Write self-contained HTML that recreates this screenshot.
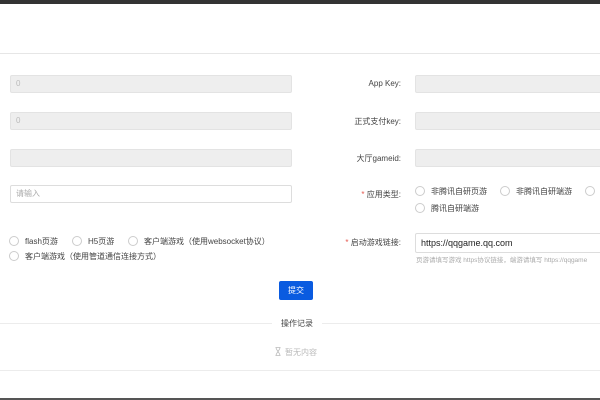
<!DOCTYPE html>
<html><head><meta charset="utf-8"><style>
*{box-sizing:border-box;margin:0;padding:0}
body{width:600px;height:400px;overflow:hidden;background:#fff;font-family:"Liberation Sans","Noto Sans CJK SC",sans-serif;font-size:8px;color:#333;position:relative}
.a{position:absolute}
.in{position:absolute;height:18px;background:#eee;border:1px solid #e3e3e3;border-radius:2px;color:#bbb;font-size:8px;line-height:16px;padding-left:5px}
.lab{position:absolute;right:199px;font-size:8px;color:#444;white-space:nowrap}
.r{display:inline-block;width:10px;height:10px;border:1px solid #ccc;border-radius:50%;vertical-align:-2px;margin-right:6px}
.rt{position:absolute;font-size:8px;color:#444;white-space:nowrap}
.st{color:#e5584f}
</style></head><body>
<div class="a" style="left:0;top:0;width:600px;height:4px;background:#333"></div>
<div class="a" style="left:0;top:53px;width:600px;height:1px;background:#e6e6e6"></div>

<div class="in" style="left:10px;top:75px;width:282px">0</div>
<div class="in" style="left:10px;top:112px;width:282px">0</div>
<div class="in" style="left:10px;top:149px;width:282px"></div>
<div class="in" style="left:10px;top:185px;width:282px;background:#fff;border-color:#ddd;color:#aaa">请输入</div>

<div class="lab" style="top:79px">App Key:</div>
<div class="lab" style="top:116px">正式支付key:</div>
<div class="lab" style="top:153px">大厅gameid:</div>
<div class="lab" style="top:189px"><span class="st">* </span>应用类型:</div>
<div class="lab" style="top:237px"><span class="st">* </span>启动游戏链接:</div>
<div class="in" style="left:415px;top:75px;width:190px"></div>
<div class="in" style="left:415px;top:112px;width:190px"></div>
<div class="in" style="left:415px;top:149px;width:190px"></div>

<div class="rt" style="left:415px;top:186px"><span class="r"></span>非腾讯自研页游</div>
<div class="rt" style="left:500px;top:186px"><span class="r"></span>非腾讯自研端游</div>
<div class="rt" style="left:585px;top:186px"><span class="r"></span></div>
<div class="rt" style="left:415px;top:203px"><span class="r"></span>腾讯自研端游</div>

<div class="in" style="left:415px;top:233px;width:190px;height:20px;background:#fff;border-color:#ddd;color:#222;font-size:9px;line-height:18px">https://qqgame.qq.com</div>
<div class="rt" style="left:416px;top:254px;font-size:6.5px;color:#aaa">页游请填写游戏 https协议链接，端游请填写 https://qqgame</div>

<div class="rt" style="left:9px;top:236px"><span class="r"></span>flash页游</div>
<div class="rt" style="left:72px;top:236px"><span class="r"></span>H5页游</div>
<div class="rt" style="left:128px;top:236px"><span class="r"></span>客户端游戏（使用websocket协议）</div>
<div class="rt" style="left:9px;top:251px"><span class="r"></span>客户端游戏（使用管道通信连接方式）</div>

<div class="a" style="left:279px;top:281px;width:34px;height:19px;background:#0a5be0;border-radius:2px;color:#fff;font-size:8px;text-align:center;line-height:19px">提交</div>

<div class="a" style="left:0;top:323px;width:600px;height:1px;background:#ececec"></div>
<div class="a" style="left:272px;top:318px;width:50px;background:#fff;text-align:center;font-size:8px;color:#444">操作记录</div>
<div class="a" style="left:275px;top:347px;font-size:8px;color:#bbb"><svg width="6" height="9" viewBox="0 0 6 9" style="vertical-align:-1px;margin-right:4px"><path d="M0.5 0.5H5.5M0.5 8.5H5.5M1 0.5C1 3 5 6 5 8.5M5 0.5C5 3 1 6 1 8.5" stroke="#bbb" fill="none" stroke-width="0.8"/></svg>暂无内容</div>
<div class="a" style="left:0;top:370px;width:600px;height:1px;background:#ececec"></div>
<div class="a" style="left:0;top:398px;width:600px;height:2px;background:#555"></div>
</body></html>
